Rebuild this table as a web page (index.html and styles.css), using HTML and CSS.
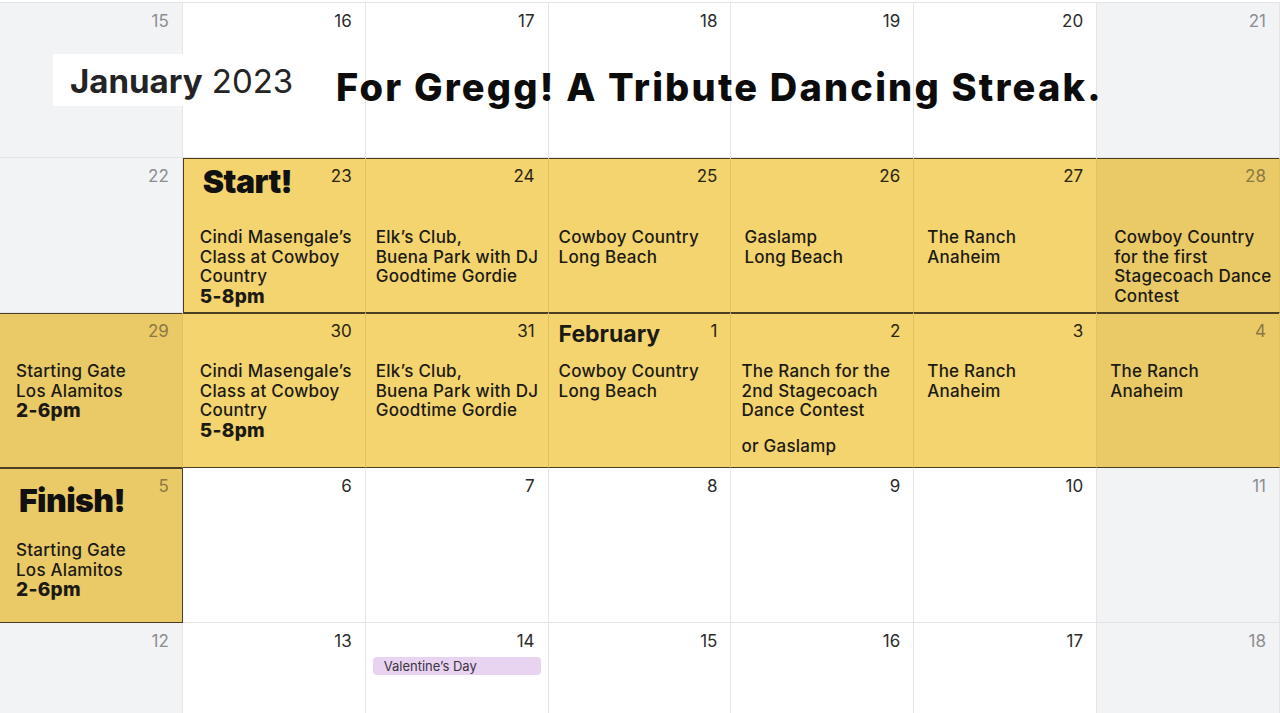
FILE: index.html
```html
<!DOCTYPE html>
<html lang="en">
<head>
  <meta charset="UTF-8" />
  <meta name="viewport" content="width=device-width, initial-scale=1.0"/>
  <title>For Gregg! A Tribute Dancing Streak.</title>
  <link rel="stylesheet" href="styles.css">
</head>
<body>
  <div class="cal">
    <!-- week 1 -->
    <div class="day wkend"><div class="head"><span class="num">15</span></div></div>
    <div class="day"><div class="head"><span class="num">16</span></div></div>
    <div class="day"><div class="head"><span class="num">17</span></div></div>
    <div class="day"><div class="head"><span class="num">18</span></div></div>
    <div class="day"><div class="head"><span class="num">19</span></div></div>
    <div class="day"><div class="head"><span class="num">20</span></div></div>
    <div class="day wkend"><div class="head"><span class="num">21</span></div></div>

    <!-- week 2 -->
    <div class="day wkend"><div class="head"><span class="num">22</span></div></div>
    <div class="day hl first">
      <div class="head"><span class="big">Start!</span><span class="num">23</span></div>
      <div class="ev gap-lg">Cindi Masengale’s<br>Class at Cowboy<br>Country<br><b>5-8pm</b></div>
    </div>
    <div class="day hl pad-s">
      <div class="head"><span class="num">24</span></div>
      <div class="ev gap-lg">Elk’s Club,<br>Buena Park with DJ<br>Goodtime Gordie</div>
    </div>
    <div class="day hl pad-s">
      <div class="head"><span class="num">25</span></div>
      <div class="ev gap-lg">Cowboy Country<br>Long Beach</div>
    </div>
    <div class="day hl pad-m">
      <div class="head"><span class="num">26</span></div>
      <div class="ev gap-lg">Gaslamp<br>Long Beach</div>
    </div>
    <div class="day hl pad-m">
      <div class="head"><span class="num">27</span></div>
      <div class="ev gap-lg">The Ranch<br>Anaheim</div>
    </div>
    <div class="day wkend hl">
      <div class="head"><span class="num">28</span></div>
      <div class="ev gap-lg">Cowboy Country<br>for the first<br>Stagecoach Dance<br>Contest</div>
    </div>

    <!-- week 3 -->
    <div class="day wkend hl pad-first">
      <div class="head"><span class="num">29</span></div>
      <div class="ev">Starting Gate<br>Los Alamitos<br><b>2-6pm</b></div>
    </div>
    <div class="day hl">
      <div class="head"><span class="num">30</span></div>
      <div class="ev">Cindi Masengale’s<br>Class at Cowboy<br>Country<br><b>5-8pm</b></div>
    </div>
    <div class="day hl pad-s">
      <div class="head"><span class="num">31</span></div>
      <div class="ev">Elk’s Club,<br>Buena Park with DJ<br>Goodtime Gordie</div>
    </div>
    <div class="day hl pad-s">
      <div class="head"><span class="month">February</span><span class="num">1</span></div>
      <div class="ev">Cowboy Country<br>Long Beach</div>
    </div>
    <div class="day hl pad-s">
      <div class="head"><span class="num">2</span></div>
      <div class="ev">The Ranch for the<br>2nd Stagecoach<br>Dance Contest</div>
      <div class="ev or">or Gaslamp</div>
    </div>
    <div class="day hl pad-m">
      <div class="head"><span class="num">3</span></div>
      <div class="ev">The Ranch<br>Anaheim</div>
    </div>
    <div class="day wkend hl pad-m">
      <div class="head"><span class="num">4</span></div>
      <div class="ev">The Ranch<br>Anaheim</div>
    </div>

    <!-- week 4 -->
    <div class="day wkend hl last pad-first">
      <div class="head"><span class="big low">Finish!</span><span class="num">5</span></div>
      <div class="ev gap-xl">Starting Gate<br>Los Alamitos<br><b>2-6pm</b></div>
    </div>
    <div class="day"><div class="head"><span class="num">6</span></div></div>
    <div class="day"><div class="head"><span class="num">7</span></div></div>
    <div class="day"><div class="head"><span class="num">8</span></div></div>
    <div class="day"><div class="head"><span class="num">9</span></div></div>
    <div class="day"><div class="head"><span class="num">10</span></div></div>
    <div class="day wkend"><div class="head"><span class="num">11</span></div></div>

    <!-- week 5 -->
    <div class="day wkend"><div class="head"><span class="num">12</span></div></div>
    <div class="day"><div class="head"><span class="num">13</span></div></div>
    <div class="day">
      <div class="head"><span class="num">14</span></div>
      <div class="pill">Valentine’s Day</div>
    </div>
    <div class="day"><div class="head"><span class="num">15</span></div></div>
    <div class="day"><div class="head"><span class="num">16</span></div></div>
    <div class="day"><div class="head"><span class="num">17</span></div></div>
    <div class="day wkend"><div class="head"><span class="num">18</span></div></div>

    <div class="month-box"><b>January</b> 2023</div>
    <h1 class="title">For Gregg! A Tribute Dancing Streak.</h1>
  </div>
</body>
</html>
```

FILE: styles.css
```css
body { margin: 0; background: #fff; font-family: Inter, "Noto Sans", sans-serif; color: #1c1a14; overflow: hidden; }

.cal { position: relative; display: grid; grid-template-columns: repeat(7, minmax(0, 1fr)); grid-auto-rows: 155px; margin-top: 2px; border-top: 1px solid #e4e4e6; }

.day { box-sizing: border-box; min-width: 0; padding: 8px 13px 0 17px; background: #fff; border-right: 1px solid #e4e4e6; border-bottom: 1px solid #e4e4e6; }
.day.wkend { background: #f2f3f5; }
.day.hl { background: #f3d46e; border-right-color: #e2c25f; border-bottom-color: #4a3f22; box-shadow: inset 0 1px 0 #4a3f22; }
.day.wkend.hl { background: #eaca66; }
.day.hl.first { box-shadow: inset 0 1px 0 #4a3f22, inset 1px 0 0 #4a3f22; }
.day.hl.last { border-right-color: #4a3f22; }

.pad-s { padding-left: 10px; }
.pad-m { padding-left: 13px; }
.pad-first { padding-left: 16px; }

.head { display: flex; justify-content: space-between; align-items: flex-start; height: 20px; }
.num { margin-left: auto; font-size: 17px; line-height: 20px; color: #2b2b2b; }
.wkend .num { color: #8d8d90; }
.hl .num { color: #2a2412; }
.wkend.hl .num { color: #8c7844; }

.big { font-size: 32px; line-height: 20px; font-weight: 900; letter-spacing: -0.6px; margin-top: 6px; margin-left: 3px; color: #111; }
.big.low { margin-top: 15px; }
.month { font-size: 23px; line-height: 20px; font-weight: 700; margin-top: 3px; color: #1c1a14; }

.ev { margin-top: 21px; font-size: 17px; line-height: 19.5px; font-weight: 500; letter-spacing: 0.25px; white-space: nowrap; color: #1c1a14; }
.ev b { font-size: 19px; font-weight: 800; letter-spacing: 0.3px; }
.gap-lg { margin-top: 42px; }
.gap-xl { margin-top: 45px; }
.ev.or { margin-top: 16px; }

.pill { margin: 6px -6px 0 -10px; height: 18px; line-height: 18px; padding-left: 11px; font-size: 13px; color: #3a3340; background: #e8d3f1; border-radius: 4px; }

.month-box { position: absolute; left: 53px; top: 51px; width: 247px; height: 52px; box-sizing: border-box; padding: 3px 0 0 17px; background: #fff; font-size: 33px; line-height: 49px; color: #242426; }
.month-box b { font-weight: 700; }

.title { position: absolute; left: 336px; top: 58px; margin: 0; font-size: 38px; line-height: 52px; font-weight: 800; letter-spacing: 2.2px; color: #0c0c0c; white-space: nowrap; }
```
